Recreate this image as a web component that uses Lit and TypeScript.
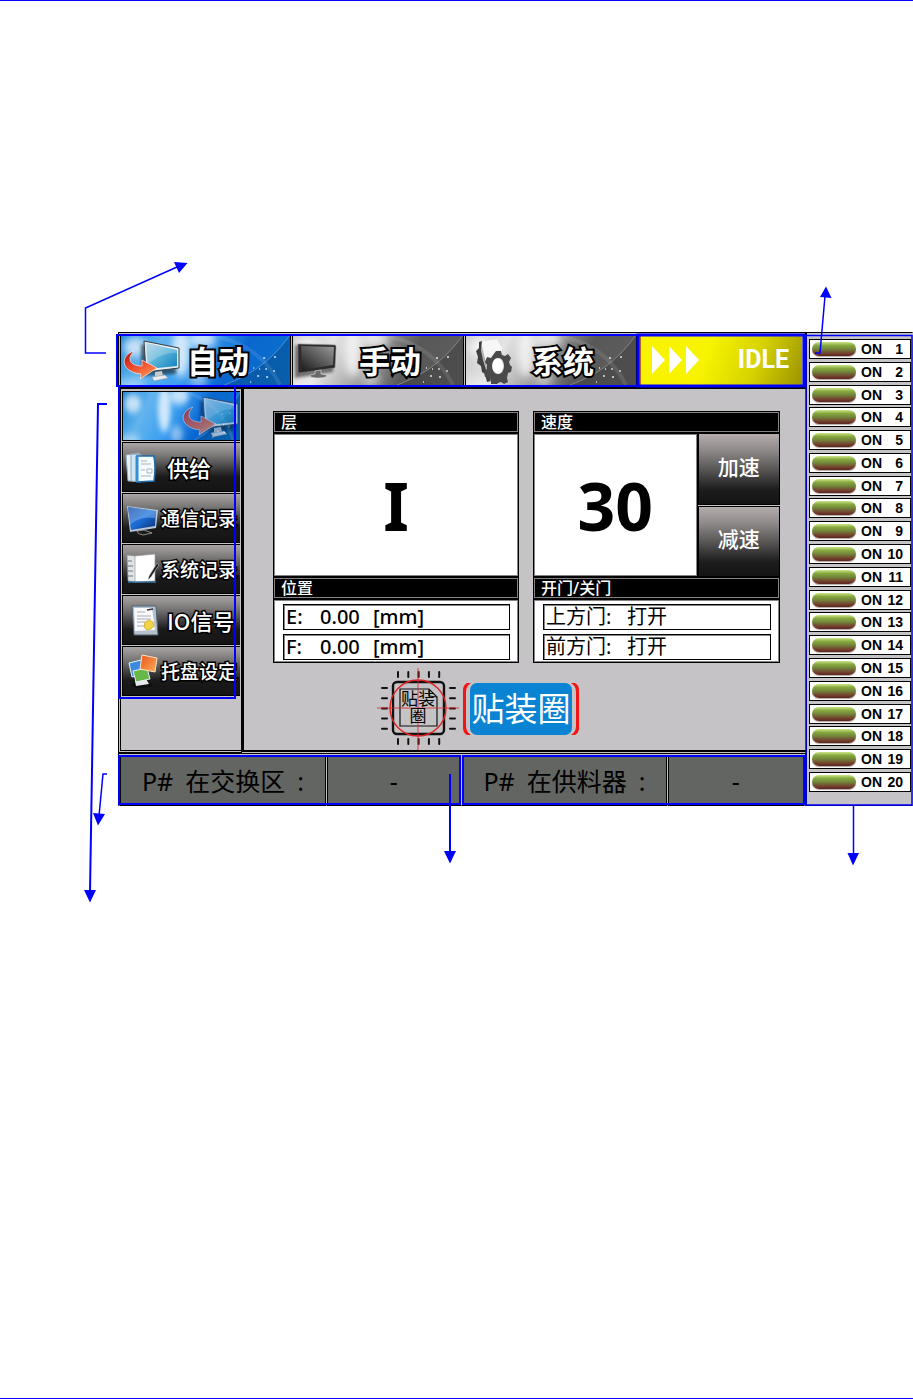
import { LitElement, html, css, svg } from "lit";
import { customElement, state } from "lit/decorators.js";

const defs = html`<svg class="defs" width="0" height="0" aria-hidden="true">
  <defs>
    <linearGradient id="sky" x1="0" y1="0" x2="1" y2="0.2">
      <stop offset="0" stop-color="#1a86d8" /><stop offset="0.25" stop-color="#62b4ee" />
      <stop offset="0.5" stop-color="#3b9ff0" /><stop offset="0.75" stop-color="#0a66d0" />
      <stop offset="1" stop-color="#0a70cc" />
    </linearGradient>
    <linearGradient id="steel" x1="0" y1="0" x2="1" y2="0.15">
      <stop offset="0" stop-color="#c8c8c8" /><stop offset="0.25" stop-color="#e4e4e4" />
      <stop offset="0.5" stop-color="#a0a0a0" /><stop offset="0.75" stop-color="#585858" />
      <stop offset="1" stop-color="#5c5c5c" />
    </linearGradient>
    <linearGradient id="screen" x1="0" y1="0" x2="1" y2="1">
      <stop offset="0" stop-color="#a9cfe2" /><stop offset="0.5" stop-color="#56b2d8" /><stop offset="1" stop-color="#0f7fbd" />
    </linearGradient>
    <linearGradient id="darkscreen" x1="0" y1="1" x2="1" y2="0">
      <stop offset="0" stop-color="#1c1c1c" /><stop offset="0.5" stop-color="#5a5a5a" /><stop offset="1" stop-color="#9a9a9a" />
    </linearGradient>
    <linearGradient id="bluescreen" x1="0" y1="0" x2="1" y2="1">
      <stop offset="0" stop-color="#0a2f86" /><stop offset="0.5" stop-color="#1c6fd8" /><stop offset="1" stop-color="#0b2d78" />
    </linearGradient>
    <linearGradient id="arrow" x1="0" y1="0" x2="0.6" y2="1">
      <stop offset="0" stop-color="#a81414" /><stop offset="0.5" stop-color="#e8452c" /><stop offset="1" stop-color="#ff8a4a" />
    </linearGradient>
    <linearGradient id="orange" x1="0" y1="0" x2="1" y2="1">
      <stop offset="0" stop-color="#e8561c" /><stop offset="1" stop-color="#ffac58" />
    </linearGradient>
    <filter id="soft" x="-50%" y="-50%" width="200%" height="200%"><feGaussianBlur stdDeviation="4" /></filter>
    <filter id="shade" x="-50%" y="-50%" width="200%" height="200%"><feGaussianBlur stdDeviation="1.5" /></filter>
  </defs>
</svg>`;

const backdrop = (tone: string) => html`<svg class="backdrop" viewBox="0 0 170 50" preserveAspectRatio="none" aria-hidden="true">
  <rect width="170" height="50" fill="url(#${tone})" />
  <g fill="#fff" filter="url(#soft)">
    <ellipse cx="14" cy="12" rx="12" ry="10" opacity="0.7" />
    <ellipse cx="60" cy="18" rx="9" ry="24" opacity="0.75" />
    <ellipse cx="82" cy="4" rx="14" ry="9" opacity="0.7" />
    <ellipse cx="78" cy="44" rx="9" ry="9" opacity="0.45" />
    <ellipse cx="10" cy="50" rx="16" ry="6" opacity="0.4" />
  </g>
  <path d="M170 0C154 22 136 38 104 50H170Z" fill="#000" opacity="0.16" />
  <path d="M170 0C154 22 136 38 104 50" fill="none" stroke="#fff" stroke-width="0.7" opacity="0.4" />
  <path d="M98 2C124 8 146 22 160 50" fill="none" stroke="#fff" stroke-width="4" opacity="0.1" />
  <path d="M143 23h2M154 22h2M133 33h1M139 34h1M146 33v2M154 35v2M137 41h2M146 42h2M130 47h1" stroke="#fff" stroke-width="1.3" opacity="0.85" />
</svg>`;

const monitorArrow = html`<svg class="tab-icon" viewBox="0 0 60 48" aria-hidden="true">
  <path d="M20 8L56 18 55 38 20 40Z" fill="#000" opacity="0.5" filter="url(#shade)" />
  <path d="M23 5L58 12 58 32 25 36Z" fill="#e6edf0" stroke="#33404a" stroke-width="1" />
  <path d="M25 7L56 14 56 30 27 33Z" fill="url(#screen)" />
  <path d="M26 29C38 19 48 16 56 17V14L25 7Z" fill="#fff" opacity="0.22" />
  <path d="M34 36l7-1 1 5-8 1Z" fill="#c8ccd0" />
  <path d="M31 41l13-2 3 3-14 3Z" fill="#e8ebed" stroke="#8b9298" stroke-width="0.5" />
  <path d="M13 15C-2 20 0 36 20 38L19 43 36 32 21 24 21 30C8 30 6 22 13 15Z" fill="url(#arrow)" stroke="#fff" stroke-width="0.6" />
</svg>`;

const monitor = html`<svg class="tab-icon" viewBox="0 0 60 48" aria-hidden="true">
  <path d="M2 9L40 10 40 36 2 42Z" fill="#000" opacity="0.5" filter="url(#shade)" />
  <path d="M5 8L42 9Q43 9 43 11L42 31Q42 32 41 32L7 37Q5 37 5 35Z" fill="#2b2b2b" stroke="#888" stroke-width="0.6" />
  <path d="M8 10L41 11 40 29 9 34Z" fill="url(#darkscreen)" />
  <path d="M22 35l6-1v4l6 1q0 3-8 3t-9-2q0-2 5-2Z" fill="#6a6a6a" stroke="#ddd" stroke-width="0.6" />
</svg>`;

const gear = html`<svg class="tab-icon" viewBox="0 0 60 48" aria-hidden="true">
  <path d="M14 10L30 8 34 40 22 44Z" fill="#000" opacity="0.3" filter="url(#shade)" />
  <path d="M15 6L31 3 36 12 36 38 24 44Z" fill="#f6f6f6" />
  <path d="M16 5L13 6 13 12 10 15 12 21 11 27 15 30 16 36 19 38 21 46 25 45 20 34 17 24 15 14Z" fill="#404040" />
  <path fill="#4a4a4a" fill-rule="evenodd" d="M30 15h5l1 4 3 1 3-2 3 4-2 4 1 3 2 2-1 5-3 1-1 5 1 4-4 2-3-2-3 1-2 3-5-1 0-5-3-3-3 0-1-5 3-3 0-4-2-3 2-5 4 1 2-3ZM32 22a6 8 0 1 0 .1 0Z" />
  <ellipse cx="32" cy="30" rx="5" ry="7" fill="#fff" />
</svg>`;

const sideArt: Record<string, unknown> = {
  supply: svg`<path d="M3 8L16 6 18 34 5 34Z" fill="#eaf1f6" stroke="#8fa9ba" /><path d="M8 7L19 8 18 35 8 34Z" fill="#d3e5f0" stroke="#8fa9ba" />
    <path d="M14 9L31 9Q33 20 31 34L14 35Z" fill="#f5fafd" stroke="#1d6bab" stroke-width="1.6" /><path d="M14 9V35" stroke="#2e8fd6" stroke-width="3" />
    <path d="M18 14h6M18 17h10M18 23h4M24 22h5v4h-5ZM18 29h10" stroke="#a9b5bd" fill="none" />`,
  comm: svg`<path d="M4 8L35 12 33 30 7 34Z" fill="#b9c8d8" /><path d="M5 9L33 13 32 28 8 32Z" fill="url(#bluescreen)" />
    <path d="M5 9L33 13 32 20C21 18 13 22 7 27Z" fill="#9cc6f5" opacity="0.45" /><path d="M14 33l7-1 8 3-9 2q-6-1-6-4Z" fill="#1c1c1c" stroke="#b8b8b8" stroke-width="0.7" />`,
  log: svg`<path d="M4 6L13 7V33L5 32Z" fill="#dfe4e6" stroke="#888" stroke-width="0.7" /><path d="M12 7L32 5 32 32 12 33Z" fill="#fff" stroke="#999" stroke-width="0.7" />
    <path d="M5 12h4M5 17h5M5 22h5M5 27h5" stroke="#777" /><path d="M5 33H33" stroke="#3c84b7" stroke-width="1.3" />
    <path d="M34 14L26 27 25 31 28 28 36 16Z" fill="#222" stroke="#ddd" stroke-width="0.5" />`,
  io: svg`<path d="M9 6L33 6 35 35 11 35Z" fill="#b3c1cf" stroke="#51606f" /><path d="M11 8L29 8 32 30 12 31Z" fill="#fafafa" />
    <path d="M14 12h8M14 16h14M14 19h14M14 22h8M14 26h8" stroke="#aab" /><path d="M24 10l6-1" stroke="#334" stroke-width="1.4" />
    <path d="M22 22l4-2 4 2 1 4-3 3-4 1-3-3Z" fill="#f1d24a" stroke="#cda21c" stroke-width="0.7" />`,
  tray: svg`<ellipse cx="19" cy="34" rx="11" ry="3" fill="#000" opacity="0.4" /><path d="M12 30l11-2 3 5-13 2Z" fill="#e6e9ec" />
    <path d="M6 12L18 9 21 23 9 26Z" fill="#3d8be0" stroke="#dfe" stroke-width="1" /><path d="M10 20L24 17 27 28 13 31Z" fill="#66b947" stroke="#eef" stroke-width="1" />
    <path d="M19 4L34 7 32 21 17 18Z" fill="url(#orange)" stroke="#ffe3c8" stroke-width="1" />`,
};

const chip = html`<svg class="chip" viewBox="0 0 84 84" role="img" aria-label="贴装圈">
  <g stroke="#111" stroke-width="2" stroke-linecap="round">
    ${[0, 1, 2, 3, 4].map((i) => svg`<path d="M${22 + i * 10.3} 5v5M${22 + i * 10.3} 72v5M6 ${21 + i * 10.2}h5M74 ${21 + i * 10.2}h5" />`)}
  </g>
  <rect x="17" y="15" width="51" height="52" rx="4" fill="none" stroke="#111" stroke-width="2.4" />
  <path d="M24 22H53L61 30V59H24Z" fill="none" stroke="#111" stroke-width="1.2" />
  <path d="M53 22L53 29 61 30" fill="none" stroke="#111" stroke-width="1" />
  <circle cx="42" cy="41" r="28" fill="none" stroke="#d22" stroke-width="1.4" />
  <path d="M42 1V83M1 41H83" stroke="#d22" stroke-width="0.8" />
  <text text-anchor="middle" class="chip-text"><tspan x="42" y="38">贴装</tspan><tspan x="42" y="55">圈</tspan></text>
</svg>`;

const badge = html`<svg class="badge" viewBox="0 0 118 56" role="img" aria-label="贴装圈">
  <path d="M9 2H5Q1 4 1 9V47Q1 52 5 54H9Q4 51 4 45V11Q4 5 9 2ZM109 2H113Q117 4 117 9V47Q117 52 113 54H109Q114 51 114 45V11Q114 5 109 2Z" fill="#f01616" />
  <rect x="8" y="2" width="102" height="52" rx="7" fill="#0a84d2" />
  <text x="59" y="40" text-anchor="middle" class="badge-text">贴装圈</text>
</svg>`;

const callouts = html`<svg class="callouts" viewBox="0 0 913 1399" preserveAspectRatio="none" aria-hidden="true">
  <g fill="none" stroke="#0000fe" stroke-width="2">
    <path d="M117 335H805V386H117Z" /><path d="M638 335H804V386H638Z" stroke-width="3" />
    <path d="M119 387V698H235V387" />
    <path d="M119 756H460V804H119ZM463 756H804V804H463Z" />
    <path d="M806 335.5H912V805H806Z" stroke-width="1.5" />
  </g>
  <g fill="none" stroke="#0000fe" stroke-width="1.5">
    <path d="M106 353H85.500V308L177 267" /><path d="M107 404H98L90 892" stroke-width="2" />
    <path d="M107 774H103L99 816" /><path d="M450 774V853" stroke-width="2" />
    <path d="M853.500 806V855" /><path d="M815 353H820L825 296" />
  </g>
  <path fill="#0000fe" d="M174 262L187.500 263 179 273ZM84 890H96L90 902.500ZM93 813L105 814 98 825.500ZM444 851H456L450 863.500ZM847.500 853H859L853 865.500ZM820 297L831.500 298 826 286.500Z" />
</svg>`;

const tabs = [
  { label: "自动", tone: "sky", icon: monitorArrow },
  { label: "手动", tone: "steel", icon: monitor },
  { label: "系统", tone: "steel", icon: gear },
];

const sideItems = [
  { art: "supply", label: "供给", large: true },
  { art: "comm", label: "通信记录", large: false },
  { art: "log", label: "系统记录", large: false },
  { art: "io", label: "IO信号", large: true },
  { art: "tray", label: "托盘设定", large: false },
];

const lamps = Array.from({ length: 20 }, (_, i) => i + 1);

@customElement("app-root")
export class AppRoot extends LitElement {
  @state() private speed = 30;

  static styles = css`
    :host {
      display: block;
      font-family: "Noto Sans", "Noto Sans CJK SC", sans-serif;
      color: #000;
    }
    * { box-sizing: border-box; }
    button { font: inherit; margin: 0; padding: 0; border: 0; cursor: pointer; }
    ul { list-style: none; margin: 0; padding: 0; }
    h2 { margin: 0; font-weight: 500; }
    .defs { position: absolute; }
    .page {
      position: relative;
      min-height: 100vh;
      background: #fff;
      border-top: 1px solid #0000fe;
      border-bottom: 1px solid #0000fe;
      padding: 331px 0 0 118px;
    }
    .callouts { position: absolute; left: 0; top: -1px; width: 100%; height: calc(100% + 2px); pointer-events: none; }
    .console { display: grid; grid-template-columns: minmax(0, 1fr) 107px; background: #c6c3c6; }

    .header { padding: 1px 1px 0; border: 1px solid #000; border-bottom-width: 2px; }
    .tabs {
      display: grid;
      grid-template-columns: 170fr 171fr 171fr 164fr;
      gap: 3px;
      border: 1px solid #000;
      padding-right: 1px;
    }
    .tab { position: relative; height: 50px; overflow: hidden; outline: 1px solid #000; display: flex; align-items: center; background: none; text-align: left; }
    .backdrop { position: absolute; inset: 0; width: 100%; height: 100%; }
    .tab-icon { position: relative; width: 60px; height: 48px; flex: none; }
    .tab-label {
      position: relative;
      margin-left: 6px;
      font: 700 31px/48px "Noto Sans CJK SC", sans-serif;
      color: #fff;
      -webkit-text-stroke: 4px #000;
      paint-order: stroke fill;
      white-space: nowrap;
    }
    .idle {
      height: 50px;
      display: flex;
      align-items: center;
      justify-content: space-between;
      padding: 0 13px 0 11px;
      border-left: 2px solid #b5651d;
      background: linear-gradient(110deg, #f8f400 0 40%, #d6d200 70%, #9c9400);
      color: #fff;
      font: 700 25px/48px Roboto, sans-serif;
    }
    .idle svg { width: 48px; height: 28px; }

    .body { display: grid; grid-template-columns: 124px minmax(0, 1fr); }
    .side { border: 1px solid #000; border-top: 0; padding: 0 0 1px 1px; display: grid; }
    .side ul { border: 1px solid #000; border-right: 0; padding: 2px 1px 0; display: flex; flex-direction: column; gap: 1px; }
    .side-item {
      position: relative;
      display: flex;
      align-items: center;
      width: 100%;
      height: 50px;
      overflow: hidden;
      border: 1px solid #000;
      border-right: 0;
      background: linear-gradient(#aaa5a5, #7c7979 25%, #1a1a1a 70%, #141414);
      color: #fff;
      font: 500 19px/28px "Noto Sans CJK SC", sans-serif;
      white-space: nowrap;
    }
    .side-item svg.art { width: 38px; height: 40px; flex: none; }
    .side-item span { -webkit-text-stroke: 3px #000; paint-order: stroke fill; }
    .side-item.large { font-size: 22px; }
    .side-item.large span { margin-left: 6px; }
    .side-item .tab-icon { margin-left: auto; opacity: 0.65; }

    .main { border-left: 2px solid #000; border-bottom: 2px solid #000; border-top: 1px solid #000; padding: 22px 26px 0 29px; margin-bottom: 1px; }
    .cards { display: grid; grid-template-columns: 246fr 247fr; gap: 14px; }
    .title {
      height: 22px;
      padding: 0 7px;
      border: 1px solid #000;
      background: #000;
      box-shadow: inset 0 0 0 1px #848284;
      color: #fff;
      font-size: 16px;
      line-height: 20px;
    }
    .value {
      height: 144px;
      display: flex;
      align-items: center;
      justify-content: center;
      border: 1px solid #000;
      background: #fff;
      box-shadow: inset 0 0 0 1px #848284;
      font: 700 66px/140px "Noto Sans", sans-serif;
    }
    .speed { display: grid; grid-template-columns: 2fr 1fr; }
    .speed-buttons { display: grid; gap: 1px; }
    .step {
      padding-bottom: 6px;
      border: 1px solid #000;
      background: linear-gradient(#b5acac, #8c8787 25%, #1c1c1c 80%, #141414);
      color: #fff;
      font-size: 21px;
      font-weight: 500;
    }
    .rows {
      height: 64px;
      display: grid;
      gap: 4px;
      padding: 4px 8px 3px 9px;
      border: 1px solid #000;
      background: #fff;
      box-shadow: inset 0 0 0 1px #848284;
    }
    .row {
      display: flex;
      align-items: center;
      border: 1px solid #000;
      box-shadow: inset 1px 1px 0 0 #848284;
      padding-left: 2px;
      font-size: 20px;
      line-height: 24px;
      white-space: nowrap;
    }
    .row.axis { font-weight: 500; }
    .axis .key { width: 34px; }
    .axis .amount { width: 53px; }
    .door .key { width: 81px; }
    .logos { display: flex; align-items: center; justify-content: center; gap: 2px; padding: 4px 98px 0 0; height: 87px; }
    .chip { width: 84px; height: 84px; }
    .badge { width: 118px; height: 56px; }
    .chip-text { font: 400 17px "Noto Sans CJK SC", sans-serif; }
    .badge-text { font: 400 33px "Noto Sans CJK SC", sans-serif; fill: #fff; }

    .footer {
      display: grid;
      grid-template-columns: 205fr 133fr 204fr 135fr;
      gap: 3px;
      padding: 2px 2px 0;
      border: 1px solid #000;
      border-bottom-color: #7b716f;
    }
    .cell {
      height: 49px;
      display: flex;
      align-items: center;
      justify-content: center;
      gap: 12px;
      background: #636563;
      outline: 1px solid #000;
      font-size: 25px;
      line-height: 48px;
      white-space: nowrap;
    }

    .lamps {
      display: flex;
      flex-direction: column;
      justify-content: space-between;
      padding: 6px 1px 13px 2px;
      border: 1px solid #000;
      border-right-color: #c6c3c6;
    }
    .lamp {
      height: 20px;
      display: flex;
      align-items: center;
      padding: 0 7px 0 2px;
      border: 1px solid #000;
      background: #fff;
      font: 700 14px/18px "Liberation Sans", sans-serif;
    }
    .led {
      width: 44px;
      height: 14px;
      border-radius: 7px;
      margin-right: 5px;
      background: linear-gradient(#cbe58a, #86a83e 25%, #71863a 50%, #74452f 78%, #5c2420);
      box-shadow: 0 1px 1px #b0a8a4;
    }
    .lamp .no { margin-left: auto; }
  `;

  render() {
    return html`
      ${defs}
      <div class="page">
        <div class="console">
          <div>
            <header class="header">
              <nav class="tabs">
                ${tabs.map((t) => html`<button class="tab">${backdrop(t.tone)}${t.icon}<span class="tab-label">${t.label}</span></button>`)}
                <div class="idle" role="status">
                  <svg viewBox="0 0 48 28" aria-hidden="true"><path d="M0 0L13 14 0 28ZM17 0L30 14 17 28ZM34 0L47 14 34 28Z" fill="#fff" /></svg>
                  <span>IDLE</span>
                </div>
              </nav>
            </header>

            <div class="body">
              <nav class="side">
                <ul>
                  <li><button class="side-item" aria-label="自动">${backdrop("sky")}${monitorArrow}</button></li>
                  ${sideItems.map((s) => html`<li>
                    <button class="side-item ${s.large ? "large" : ""}">
                      <svg class="art" viewBox="0 0 38 40" aria-hidden="true">${sideArt[s.art]}</svg><span>${s.label}</span>
                    </button>
                  </li>`)}
                </ul>
              </nav>

              <main class="main">
                <div class="cards">
                  <section>
                    <h2 class="title">层</h2>
                    <div class="value">I</div>
                    <h2 class="title">位置</h2>
                    <div class="rows">
                      <div class="row axis"><span class="key">E:</span><span class="amount">0.00</span><span>[mm]</span></div>
                      <div class="row axis"><span class="key">F:</span><span class="amount">0.00</span><span>[mm]</span></div>
                    </div>
                  </section>
                  <section>
                    <h2 class="title">速度</h2>
                    <div class="speed">
                      <div class="value">${this.speed}</div>
                      <div class="speed-buttons">
                        <button class="step" @click=${() => (this.speed += 1)}>加速</button>
                        <button class="step" @click=${() => (this.speed -= 1)}>减速</button>
                      </div>
                    </div>
                    <h2 class="title">开门/关门</h2>
                    <div class="rows">
                      <div class="row door"><span class="key">上方门:</span><span>打开</span></div>
                      <div class="row door"><span class="key">前方门:</span><span>打开</span></div>
                    </div>
                  </section>
                </div>
                <div class="logos">${chip}${badge}</div>
              </main>
            </div>

            <footer class="footer">
              <div class="cell"><span>P#</span><span>在交换区</span><span>:</span></div>
              <div class="cell">-</div>
              <div class="cell"><span>P#</span><span>在供料器</span><span>:</span></div>
              <div class="cell">-</div>
            </footer>
          </div>

          <ul class="lamps">
            ${lamps.map((n) => html`<li class="lamp"><span class="led"></span><span>ON</span><span class="no">${n}</span></li>`)}
          </ul>
        </div>
        ${callouts}
      </div>
    `;
  }
}
